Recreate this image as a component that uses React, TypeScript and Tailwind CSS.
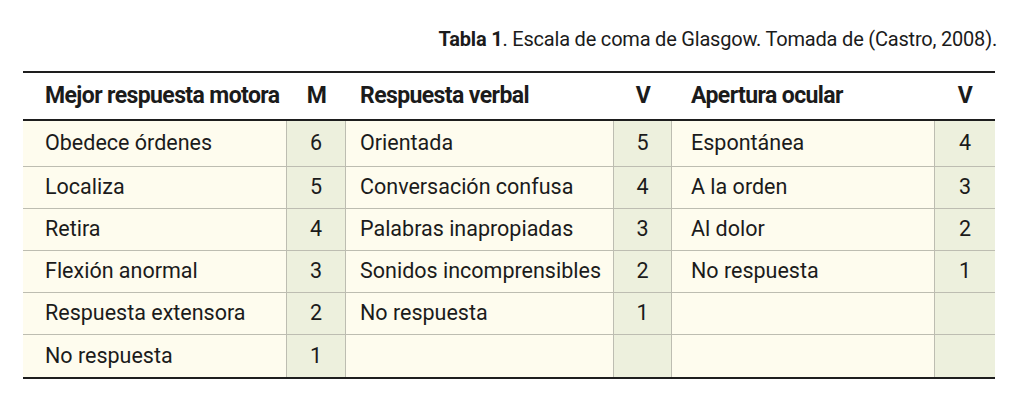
const rows: [string, string, string, string, string, string][] = [
  ['Obedece órdenes', '6', 'Orientada', '5', 'Espontánea', '4'],
  ['Localiza', '5', 'Conversación confusa', '4', 'A la orden', '3'],
  ['Retira', '4', 'Palabras inapropiadas', '3', 'Al dolor', '2'],
  ['Flexión anormal', '3', 'Sonidos incomprensibles', '2', 'No respuesta', '1'],
  ['Respuesta extensora', '2', 'No respuesta', '1', '', ''],
  ['No respuesta', '1', '', '', '', ''],
];

const grid = 'grid grid-cols-[264px_59px_268px_58px_263px_60px]';

export default function App() {
  return (
    <div className="w-[1024px] h-[405px] bg-white text-[#1b1b1b] font-['Roboto',sans-serif]">
      {/* Caption */}
      <div className="flex justify-end pr-[27px] pt-[27px] h-[71px]">
        <p className="text-[20px] leading-[24px] tracking-[-0.2px]">
          <span className="font-bold">Tabla 1</span>. Escala de coma de Glasgow. Tomada de (Castro, 2008).
        </p>
      </div>

      <div className="ml-[23px] w-[972px] border-t-2 border-b-2 border-[#1e1e1e]">
        {/* Header */}
        <div className={`${grid} h-[48px] border-b-2 border-[#1e1e1e] items-center text-[23px] font-bold tracking-[-0.6px]`}>
          <div className="pl-[22px]">Mejor respuesta motora</div>
          <div className="text-center">M</div>
          <div className="pl-[14px]">Respuesta verbal</div>
          <div className="text-center">V</div>
          <div className="pl-[19px]">Apertura ocular</div>
          <div className="text-center">V</div>
        </div>

        {/* Body */}
        {rows.map((r, i) => (
          <div
            key={i}
            className={`${grid} text-[21.5px] ${i === 0 ? 'h-[46px]' : 'h-[42px]'} ${i < rows.length - 1 ? 'border-b border-[#bdbdb1]' : ''}`}
          >
            <div className="flex items-center pl-[22px] bg-[#fefcee] border-r border-[#bdbdb1]">{r[0]}</div>
            <div className="flex items-center justify-center bg-[#edf0dd] border-r border-[#bdbdb1]">{r[1]}</div>
            <div className="flex items-center pl-[14px] bg-[#fefcee] border-r border-[#bdbdb1]">{r[2]}</div>
            <div className="flex items-center justify-center bg-[#edf0dd] border-r border-[#bdbdb1]">{r[3]}</div>
            <div className="flex items-center pl-[19px] bg-[#fefcee] border-r border-[#bdbdb1]">{r[4]}</div>
            <div className="flex items-center justify-center bg-[#edf0dd]">{r[5]}</div>
          </div>
        ))}
      </div>
    </div>
  );
}
